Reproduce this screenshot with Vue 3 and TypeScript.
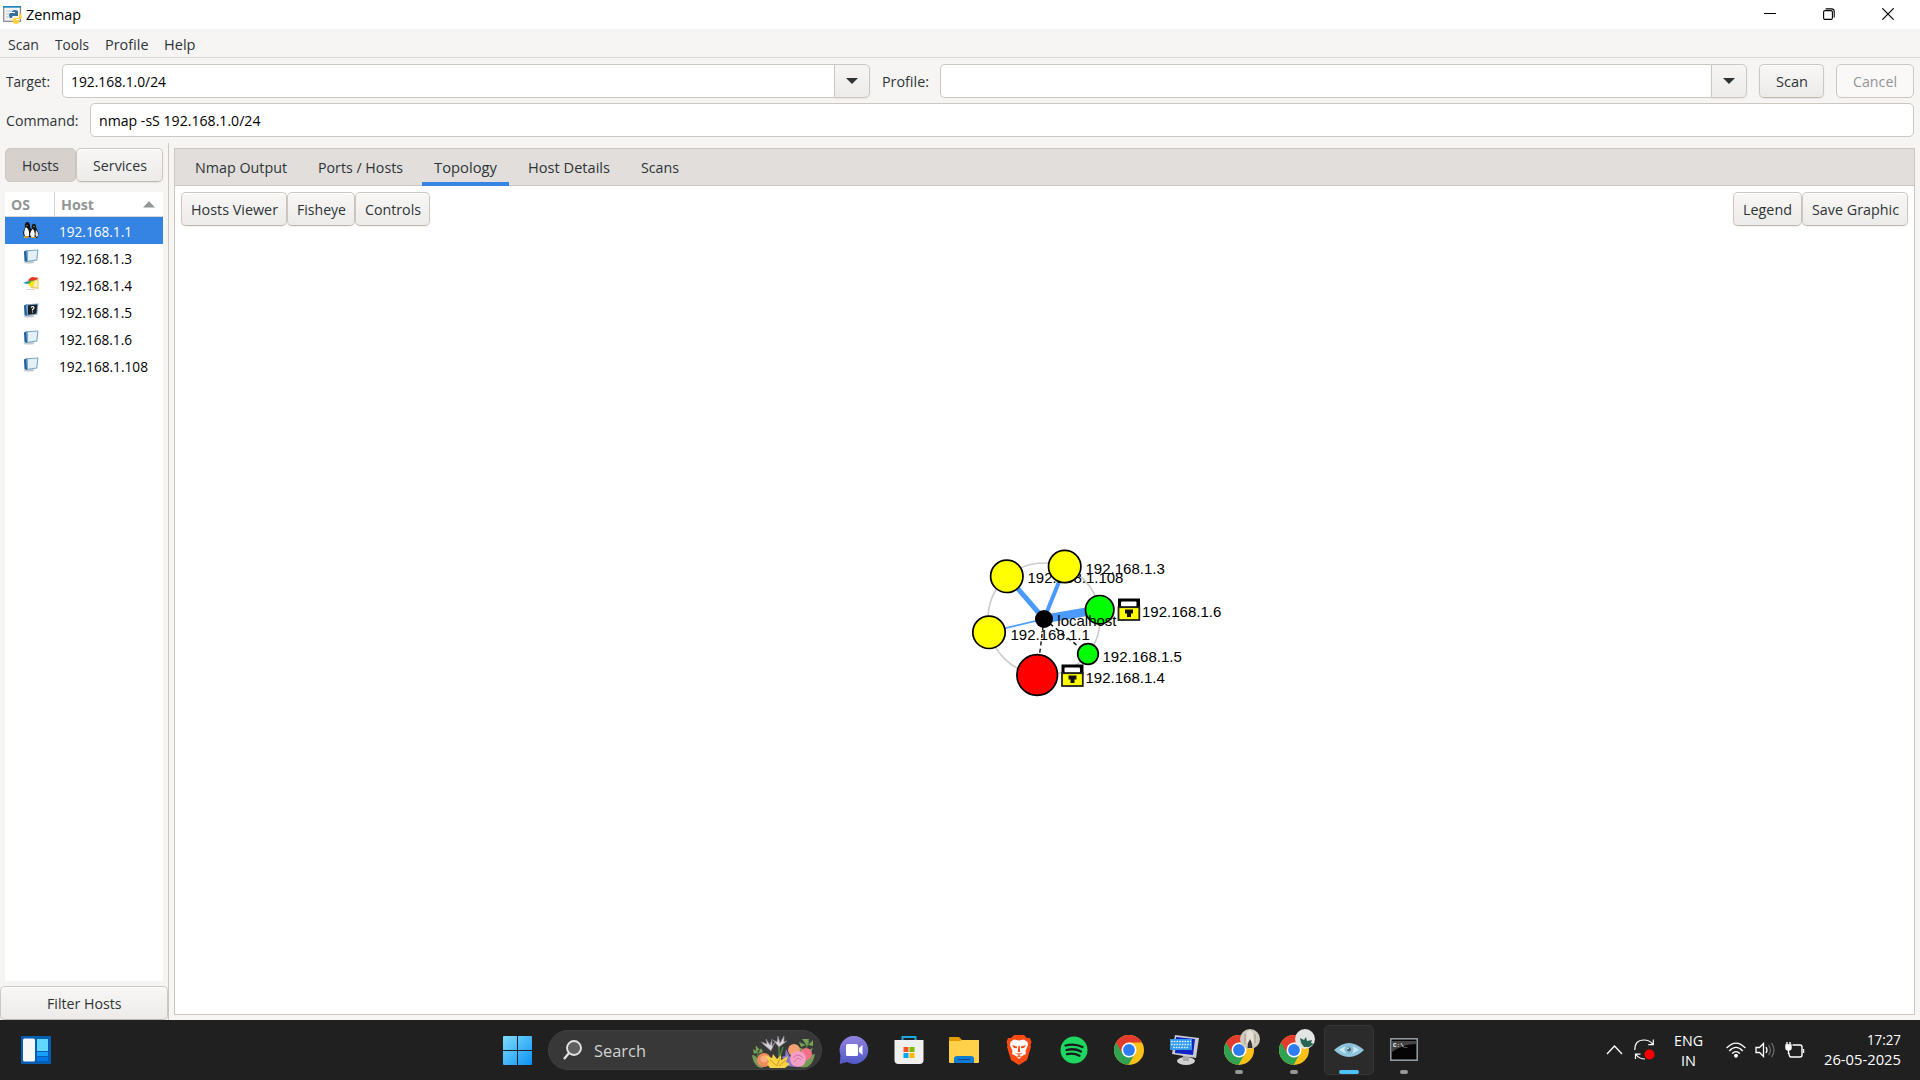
<script setup lang="ts">
import { ref } from 'vue'

// Squeezes or stretches a label horizontally to a given advance width.
const vFit = {
  mounted(el: HTMLElement, binding: { value: number }) {
    const natural = el.offsetWidth
    if (!natural) return
    const exact = el.getBoundingClientRect().width
    el.style.transform = `scaleX(${binding.value / exact})`
    el.style.marginRight = `${binding.value - exact}px`
  },
}

const target = ref('192.168.1.0/24')
const command = ref('nmap -sS 192.168.1.0/24')
const activeTab = ref('Topology')
const selected = ref('192.168.1.1')

const menus = [
  { label: 'Scan', w: 31 },
  { label: 'Tools', w: 34 },
  { label: 'Profile', w: 43.5 },
  { label: 'Help', w: 31.5 },
]
const hosts = [
  { ip: '192.168.1.1', os: 'linux', w: 73 },
  { ip: '192.168.1.3', os: 'default', w: 73 },
  { ip: '192.168.1.4', os: 'windows', w: 73 },
  { ip: '192.168.1.5', os: 'unknown', w: 73 },
  { ip: '192.168.1.6', os: 'default', w: 73 },
  { ip: '192.168.1.108', os: 'default', w: 89 },
]
const tabs = [
  { label: 'Nmap Output', w: 92 },
  { label: 'Ports / Hosts', w: 85 },
  { label: 'Topology', w: 63 },
  { label: 'Host Details', w: 82 },
  { label: 'Scans', w: 38 },
]
const nodes = [
  { label: '192.168.1.108', x: 1006.8, y: 576.3, r: 16.2, fill: '#ffff00', tx: 1027.5, ty: 583 },
  { label: '192.168.1.3', x: 1064.7, y: 566.5, r: 16.2, fill: '#ffff00', tx: 1085.5, ty: 574 },
  { label: '192.168.1.1', x: 989, y: 632.3, r: 16.2, fill: '#ffff00', tx: 1010.5, ty: 640 },
  { label: '192.168.1.6', x: 1099.7, y: 609.7, r: 14.2, fill: '#00ff00', tx: 1142, ty: 617 },
  { label: '192.168.1.5', x: 1088, y: 654, r: 10.3, fill: '#00ff00', tx: 1102.5, ty: 662 },
  { label: '192.168.1.4', x: 1037.2, y: 675, r: 20.3, fill: '#ff0000', tx: 1085.5, ty: 683 },
]
const locks = [
  { x: 1117, y: 598 },
  { x: 1060.5, y: 664 },
]
const apps = ['chat', 'store', 'folder', 'brave', 'spotify', 'chrome', 'putty', 'chrome1', 'chrome2', 'zenmap', 'cmd']
</script>

<template>
  <div class="screen">
    <header class="titlebar">
      <svg class="appicon" width="19" height="18" viewBox="0 0 19 18">
        <rect x=".7" y=".7" width="16.8" height="14.6" fill="#f4f4f4" stroke="#858585" stroke-width="1.2" />
        <rect x="0" y="0" width="18" height="1.6" fill="#1a86c8" />
        <path d="M3 5h6M3 8h3M3 11h3" stroke="#c4c4c4" />
        <path d="M9 5q3-2 6 0v5h-5q-1 0-1 2H7q-2-3 0-5h5V6H9z" fill="#36709f" />
        <path d="M16 7h1q3 3 1 6h-5v1h3v3q-3 2-6 0v-5h5q1 0 1-2z" fill="#ffd43b" />
      </svg>
      <span v-fit="55" class="t title">Zenmap</span>
      <div class="winbtns">
        <svg width="12" height="12" viewBox="0 0 12 12"><path d="M0 5.5h12" stroke="#000" /></svg>
        <svg width="12" height="12" viewBox="0 0 12 12" fill="none" stroke="#000" stroke-width="1.1">
          <rect x=".6" y="2.6" width="8.8" height="8.8" rx="1.4" />
          <path d="M2.6 .9h6q2.6 0 2.6 2.6v6" />
        </svg>
        <svg width="12" height="12" viewBox="0 0 12 12"><path d="M.3.3l11.4 11.4M11.7.3L.3 11.7" stroke="#000" stroke-width="1.2" /></svg>
      </div>
    </header>

    <nav class="menubar">
      <span v-for="m in menus" :key="m.label" class="menu"><span v-fit="m.w" class="t">{{ m.label }}</span></span>
    </nav>

    <div class="row target-row">
      <span class="lbl l1"><span v-fit="44" class="t">Target:</span></span>
      <div class="combo c1">
        <div class="entry"><span v-fit="95" class="t dark">{{ target }}</span></div>
        <div class="drop"><svg width="12" height="6" viewBox="0 0 12 6"><path d="M0 0h12L6 6z" fill="#2e3436" /></svg></div>
      </div>
      <span class="lbl l2"><span v-fit="47" class="t">Profile:</span></span>
      <div class="combo c2">
        <div class="entry"></div>
        <div class="drop"><svg width="12" height="6" viewBox="0 0 12 6"><path d="M0 0h12L6 6z" fill="#2e3436" /></svg></div>
      </div>
      <button class="btn scan"><span v-fit="32" class="t">Scan</span></button>
      <button class="btn cancel"><span v-fit="44" class="t">Cancel</span></button>
    </div>

    <div class="row command-row">
      <span class="lbl l3"><span v-fit="72.5" class="t">Command:</span></span>
      <div class="entry full"><span v-fit="161.5" class="t dark">{{ command }}</span></div>
    </div>

    <main class="body">
      <aside class="side">
        <div class="toggle">
          <button class="btn on"><span v-fit="37" class="t">Hosts</span></button>
          <button class="btn services"><span v-fit="54" class="t">Services</span></button>
        </div>
        <div class="tree">
          <div class="thead">
            <span class="th os"><span v-fit="19" class="t">OS</span></span>
            <span class="th host">
              <span v-fit="33" class="t">Host</span>
              <svg width="12" height="7" viewBox="0 0 12 7"><path d="M0 6.5h12L6 .2z" fill="#929595" /></svg>
            </span>
          </div>
          <div v-for="h in hosts" :key="h.ip" class="tr" :class="{ sel: h.ip === selected }" @click="selected = h.ip">
            <svg v-if="h.os === 'linux'" class="osicon tux" width="16" height="16" viewBox="0 0 16 16">
              <path d="M4 0q3 0 3 4l2 7-1 4H1L0 10l2-4q-1-5 2-6z" fill="#101010" />
              <path d="M3 5q-3 5-1 9h4q1-6-3-9z" fill="#fff" />
              <path d="M10 2q3-1 3 3l3 7-2 4H8L6 11l3-5q-1-3 1-4z" fill="#181818" />
              <path d="M9.500 7q-4 5-1 8h3q1-6-2-8z" fill="#fff" /><path d="M13 8q-1 4 0 7l2-1q1-3-2-6z" fill="#ddd" />
              <path d="M1 14h5l-1 2H1zM8 15h5v1H8z" fill="#cf9d2c" /><path d="M3 3h2l-1 1zM10 4h2l-1 1z" fill="#e8b030" />
            </svg>
            <svg v-else-if="h.os === 'windows'" class="osicon up" width="16" height="14" viewBox="0 0 16 14">
              <path d="M7 2l8.500-1v11l-8-1z" fill="#eccb62" /><path d="M10 4l4.500-.5v7l-4-.8z" fill="#fbf0b8" />
              <path d="M6 2q3-3 6-1.500L15 .5l-1 2-3 1-6 1z" fill="#e93325" /><path d="M0 6l5-2 2 1-3 2z" fill="#168ed2" />
              <path d="M4 5.500l5-2.500 2 1-3 5z" fill="#48ae3b" /><path d="M5 8l4-4 3 1-3 5z" fill="#ffe414" /><path d="M3 12.500h9" stroke="#d8d8d8" />
            </svg>
            <svg v-else class="osicon up" width="16" height="15" viewBox="0 0 16 15">
              <ellipse cx="6" cy="13.200" rx="5.500" ry="1.300" fill="#c5cbd0" />
              <path d="M1 2.500L4 1v12l-2.500-1z" fill="#1d5e9e" /><path d="M3 1.200L15.500.5l-1.200 11L4 13z" fill="#7ba6c4" />
              <path d="M5 2.200l9.300-.7-1 9-8.300 1.300z" :fill="h.os === 'unknown' ? '#1c2024' : '#e3f0f5'" />
              <path v-if="h.os === 'unknown'" d="M8 4.500q2-2 3 0 0 1-1.500 2v1M9.500 8.500v1" stroke="#fff" fill="none" stroke-width="1.200" />
            </svg>
            <span v-fit="h.w" class="t">{{ h.ip }}</span>
          </div>
        </div>
        <button class="btn filter"><span v-fit="74.5" class="t">Filter Hosts</span></button>
      </aside>

      <section class="notebook">
        <div class="tabs">
          <span v-for="t in tabs" :key="t.label" class="tab" :class="{ active: t.label === activeTab }" @click="activeTab = t.label">
            <span v-fit="t.w" class="t">{{ t.label }}</span>
          </span>
        </div>
        <div class="tools">
          <button class="btn b1"><span v-fit="87" class="t">Hosts Viewer</span></button>
          <button class="btn b2"><span v-fit="49" class="t">Fisheye</span></button>
          <button class="btn b3"><span v-fit="56" class="t">Controls</span></button>
          <span class="grow"></span>
          <button class="btn b4"><span v-fit="49" class="t">Legend</span></button>
          <button class="btn b5"><span v-fit="87" class="t">Save Graphic</span></button>
        </div>
        <svg class="graph" width="280" height="180" viewBox="960 530 280 180">
          <circle cx="1044" cy="619" r="56" fill="none" stroke="#cccccc" stroke-width="1.600" />
          <g stroke="#4a9aff">
            <path d="M1044 619L1007 576" stroke-width="5" /><path d="M1044 619L1065 567" stroke-width="4" />
            <path d="M1044 619L1100 609.500" stroke-width="8.500" /><path d="M1044 619L989 632" stroke-width="1.700" />
          </g>
          <path d="M1044 619L1037 675M1044 619L1088 654" stroke="#111" stroke-width="1.400" stroke-dasharray="4 3.500" />
          <g v-for="n in nodes" :key="n.label">
            <circle :cx="n.x" :cy="n.y" :r="n.r" :fill="n.fill" stroke="#000" stroke-width="1.700" />
            <text :x="n.tx" :y="n.ty">{{ n.label }}</text>
          </g>
          <circle cx="1044" cy="619" r="9" fill="#000" />
          <text x="1057.300" y="626.300">localhost</text>
          <g v-for="l in locks" :key="l.x" :transform="`translate(${l.x} ${l.y})`">
            <path d="M1 .500h22v10H1z" fill="#000" /><rect x="4" y="3.500" width="15.500" height="5" rx="1" fill="#fff" />
            <rect x="1.500" y="9.200" width="20.800" height="12.800" fill="#ffff00" stroke="#222" stroke-width="1.800" />
            <path d="M8 11.500h8v4h-2v3.500h-4v-3.500H8z" fill="#111" />
          </g>
        </svg>
      </section>
    </main>

    <footer class="taskbar">
      <svg class="widgets" width="30" height="28" viewBox="0 0 30 28">
        <rect width="30" height="28" rx="1" fill="#075db2" /><rect x="2" y="2.500" width="12" height="23" rx="1.500" fill="#f7f7f7" />
        <path d="M16 3h11v12H16z" fill="#62d8ff" /><path d="M16 16h11v4H16z" fill="#16a1fb" /><path d="M16 21h11v4H16z" fill="#0078e5" />
      </svg>
      <svg class="start" width="29" height="29" viewBox="0 0 29 29">
        <defs><linearGradient id="win" x2="1" y2="1"><stop stop-color="#80dcff" /><stop offset="1" stop-color="#0a91f3" /></linearGradient></defs>
        <path d="M1 0h13v14H0V1q0-1 1-1zM15 0h13q1 0 1 1v13H15zM0 15h14v14H1q-1 0-1-1zM15 15h14v13q0 1-1 1H15z" fill="url(#win)" />
      </svg>
      <div class="search">
        <svg width="19" height="20" viewBox="0 0 19 20" fill="#606060" stroke="#e3e3e3" stroke-width="1.900"><circle cx="11" cy="8" r="7" /><path d="M6 13L1 19" stroke-width="2.200" /></svg>
        <span v-fit="52" class="t stext">Search</span>
        <svg class="flowers" width="65" height="33" viewBox="0 0 65 33">
          <path d="M1 19q5-1 11 13Q3 32 1 19zM64 18q-7 0-15 13 12 3 15-13z" fill="#759b55" />
          <path d="M8 25L5 10M28 30V10M29 20l3-9M50 25l8-20" stroke="#4f8142" stroke-width="1.500" />
          <path d="M5 10l4 4-4 1zM2 13l5 3-4 2zM10 12l-3 6 5-2zM48 6l7 3-5 2zM51 3l5 7 2-7zM62 4l-5 5 5 1zM47 11l8 3-6 1zM62 12l-7 3 5 1z" fill="#77a354" />
          <path d="M20 15L10 6l6 2-1-5 4 6 2-6v7l3-4zM28 11L22 4l4 2 1-6 2 7 4-7v6l3-1z" fill="#d7d3d7" stroke="#85808b" stroke-width=".7" />
          <circle cx="13" cy="24" r="7" fill="#ef8a5f" /><circle cx="13" cy="23" r="3.500" fill="#f8ae82" />
          <circle cx="43" cy="14" r="6" fill="#f5a070" /><circle cx="55" cy="18" r="6" fill="#f27186" />
          <path d="M35 13l6 12 3 6-7-1-3-6-4-3 4-1z" fill="#8a7ace" />
          <circle cx="47" cy="23" r="8" fill="#f3a0c6" /><path d="M42 22q5-6 10 0M43 26q4-6 7-2" fill="none" stroke="#d96da3" />
          <path d="M14 19l7 3 1-4 4 5 4-4v5l7-4-2 6 4 2-5 4H19l-3-4 2-2z" fill="#f5d345" /><path d="M19 24l7 6 3-8M28 30l7-6" stroke="#d69b21" fill="none" />
        </svg>
      </div>
      <div v-for="a in apps" :key="a" class="app" :class="{ current: a === 'zenmap' }">
        <svg v-if="a === 'chat'" width="30" height="30" viewBox="0 0 30 30">
          <defs><linearGradient id="ch" x2="0" y2="1"><stop stop-color="#8f83dc" /><stop offset="1" stop-color="#5158c8" /></linearGradient></defs>
          <path d="M15 1a14 14 0 1 1-7 26L.8 29l.7-9A14 14 0 0 1 15 1z" fill="url(#ch)" />
          <rect x="7" y="9" width="12" height="12" rx="1.500" fill="#fff" /><path d="M20 13l3.500-3v10L20 17z" fill="#fff" />
        </svg>
        <svg v-else-if="a === 'store'" width="30" height="30" viewBox="0 0 30 30">
          <path d="M8.500 7V2h13v5" fill="none" stroke="#1da8df" stroke-width="2" /><path d="M.5 5h29v20q0 4-4 4h-21q-4 0-4-4z" fill="#f0f0f0" />
          <path d="M9.500 12h5v5h-5z" fill="#f25022" /><path d="M15.500 12h5v5h-5z" fill="#7fba00" /><path d="M9.500 18h5v5h-5z" fill="#00a4ef" /><path d="M15.500 18h5v5h-5z" fill="#ffb900" />
        </svg>
        <svg v-else-if="a === 'folder'" width="30" height="30" viewBox="0 0 30 30">
          <path d="M0 3q0-1 1-1h9l3 3v5H0z" fill="#df9d06" /><path d="M0 6h11l2-1h17v22q0 1-1 1H1q-1 0-1-1z" fill="#ffd04a" />
          <path d="M5 28v-4q0-3 3-3h14q3 0 3 3v4z" fill="#0e7bd0" /><path d="M9 24.500h12" stroke="#064d91" />
        </svg>
        <svg v-else-if="a === 'brave'" width="26" height="30" viewBox="0 0 26 30">
          <path d="M8 0h10l3 3 3 0 1.500 4-1 3 .5 2-4 13-8 5-8-5L1 12l.5-2-1-3L2 3l3 0z" fill="#fb4a12" />
          <path d="M8 4.500l5 1 5-1 3.500 2.500.5 3-2.500 6 .5 3-4 2-3 3-3-3-4-2 .500-3L4 10l.5-3z" fill="#fff" />
          <path d="M6 10l5 1.500v1.800L8 13zM20 10l-5 1.500v1.800l3-.3zM12.300 11h1.400l.5 6h-2.400zM9 18l4 2 4-2-4 .500zM10.500 21.500l2.500-1.500 2.500 1.500-2.500.500z" fill="#fb4a12" />
        </svg>
        <svg v-else-if="a === 'spotify'" width="28" height="28" viewBox="0 0 28 28">
          <circle cx="14" cy="14" r="13.500" fill="#1ed760" /><path d="M5.500 9.500q9-2.500 17 1.500M6.500 14q8-2 14.500 1.500M7 18.200q7-1.500 12.500 1.500" fill="none" stroke="#1b1b1b" stroke-width="2.300" stroke-linecap="round" />
        </svg>
        <svg v-else-if="a.startsWith('chrome')" class="chrome" width="40" height="40" viewBox="-5 -5 40 40">
          <circle cx="15" cy="15" r="15" fill="#fbc116" />
          <path d="M15 15L2 7.500A15 15 0 0 0 14.500 30L21 18.500z" fill="#30a352" /><path d="M2 7.500A15 15 0 0 1 28 7.500H15L8.500 18.700z" fill="#e33b2e" />
          <circle cx="15" cy="15" r="7.500" fill="#fff" /><circle cx="15" cy="15" r="5.900" fill="#2d7df0" />
          <g v-if="a === 'chrome1'"><circle cx="26" cy="4" r="10" fill="#cfc9be" /><path d="M23-3q3-4 6 1l1 10h-8z" fill="#e7e0d4" /><path d="M26 4l1.500 3 1 6-5 0 .5-5z" fill="#383634" /><path d="M21-1v10M31-1v9" stroke="#9d968a" /></g>
          <g v-if="a === 'chrome2'"><circle cx="26" cy="4" r="10" fill="#e3e5e5" /><path d="M21 3l4 2 2-3 1 4 5-1-1 3 3 1-5 3-5 0-3-4z" fill="#276753" /></g>
        </svg>
        <svg v-else-if="a === 'putty'" width="30" height="30" viewBox="0 0 30 30">
          <ellipse cx="17" cy="26" rx="9" ry="4" fill="#d2d2d2" /><path d="M14 19h6v7h-6z" fill="#a8a8a8" />
          <path d="M6 0l24 3-3 20L3 19z" fill="#c9ccd1" /><path d="M7 2l19 2-2 16-18-2z" fill="#1322c2" />
          <path d="M1 4h22v11H1z" fill="#2f97ed" /><path d="M2 6.500h20M2 9.500h20M4 12.500h16" stroke="#d8efff" stroke-width="1.600" stroke-dasharray="1.700 1" />
        </svg>
        <svg v-else-if="a === 'zenmap'" width="30" height="16" viewBox="0 0 30 16">
          <path d="M0 8Q8 1 15 1t15 7q-7 7-15 7T0 8z" fill="#8fc6de" /><path d="M5 8q10-8 20 0Q15 15 5 8z" fill="#c9e8f2" />
          <circle cx="15" cy="7.500" r="4.500" fill="#8dbccf" /><circle cx="15" cy="7.500" r="2" fill="#3b667d" /><circle cx="14" cy="6.500" r=".8" fill="#fff" />
        </svg>
        <svg v-else width="28" height="24" viewBox="0 0 28 24">
          <rect x=".8" y=".8" width="26.400" height="21.400" fill="#050505" stroke="#98a0aa" stroke-width="1.500" /><path d="M2 3h24v3Q13 6 2 14z" fill="#444" />
          <text x="3" y="9" font-family="Liberation Mono" font-size="6" font-weight="bold" fill="#fff">C:\_</text>
        </svg>
        <i v-if="['chrome1', 'chrome2', 'zenmap', 'cmd'].includes(a)" class="mark"></i>
      </div>
      <div class="tray">
        <svg class="chev" width="17" height="10" viewBox="0 0 17 10"><path d="M1 9l7.500-8L16 9" fill="none" stroke="#fff" stroke-width="1.300" /></svg>
        <svg class="sync" width="22" height="22" viewBox="0 0 22 22">
          <path d="M.8 11Q.8 1 10 1q6 0 9 4.500M19.300.5v5.200h-5M1.500 20v-4.800h5M2 15.500q3 4.500 9 4.500" fill="none" stroke="#fff" stroke-width="1.200" /><circle cx="15.500" cy="15.500" r="5" fill="#f00" />
        </svg>
        <div class="lang"><span v-fit="29" class="t">ENG</span><span v-fit="15" class="t">IN</span></div>
        <svg class="wifi" width="20" height="16" viewBox="0 0 20 16" fill="none" stroke="#fff" stroke-width="1.400"><path d="M.6 6q9.400-9.800 18.800 0M3.300 8.900q6.700-7 13.400 0M6.100 11.600q3.900-4 7.800 0" /><circle cx="10" cy="13.700" r="1.300" fill="#fff" /></svg>
        <svg class="vol" width="21" height="16" viewBox="0 0 21 16" fill="none" stroke="#fff" stroke-width="1.300"><path d="M1 5.500h3.500L8.500 1.500v13l-4-4H1z" /><path d="M11 5q2 3 0 6" /><path d="M13.500 3q4 5 0 10M16.500 1q5 7 0 14" stroke="#666" /></svg>
        <svg class="bat" width="20" height="17" viewBox="0 0 20 17" fill="none" stroke="#fff" stroke-width="1.400"><path d="M7.500 3H15q2 0 2 2v8q0 2-2 2H6q-2 0-2-4" /><path d="M1 3h5v3q0 2-2.500 2T1 6zM18.500 7v4" fill="#fff" /><path d="M2 0v3M5 0v3M3.500 7v5" /></svg>
        <div class="clock"><span v-fit="34" class="t">17:27</span><span v-fit="77" class="t">26-05-2025</span></div>
      </div>
    </footer>
  </div>
</template>

<style>
html, body { margin: 0; overflow: hidden; }
</style>

<style scoped>
* { box-sizing: border-box; }
.screen { width: 1920px; height: 1080px; background: #f6f5f4; color: #2e3436; font: 15px/20px "Open Sans", "Noto Sans", sans-serif; display: flex; flex-direction: column; }
.t { display: inline-block; white-space: pre; transform-origin: 0 50%; flex: none; }
.dark { color: #000; }
svg { display: block; flex: none; }
.titlebar { height: 29px; background: #fff; color: #000; display: flex; align-items: center; padding-left: 3px; }
.appicon { margin: 0 4px 0 0; }
.title { margin-top: -2px; }
.winbtns { margin-left: auto; display: flex; gap: 47px; padding-right: 26px; margin-top: -1px; }
.menubar { height: 29px; border-bottom: 1px solid #d9d7d4; display: flex; gap: 16px; padding: 5px 0 0 7.5px; }
.menu { display: block; }
.row { display: flex; align-items: center; height: 34px; flex: none; padding-right: 6px; }
.target-row { margin-top: 6px; }
.command-row { margin-top: 5px; }
.lbl { display: flex; padding-left: 6px; }
.l1 { width: 62px; }
.l2 { width: 70px; padding-left: 12px; }
.l3 { width: 90px; }
.combo { display: flex; height: 34px; }
.c1 { width: 808px; }
.c2 { width: 807px; }
.entry { flex: 1; height: 34px; background: #fff; border: 1px solid #cdc7c2; border-radius: 5px 0 0 5px; border-right: 0; padding: 0 8px; display: flex; align-items: center; }
.full { border-right: 1px solid #cdc7c2; border-radius: 5px; padding: 0 8px; }
.drop { width: 36px; border: 1px solid #cdc7c2; border-radius: 0 5px 5px 0; background: linear-gradient(#f6f5f4, #edebe9); display: flex; align-items: center; justify-content: center; box-shadow: 0 1px 2px #0001; }
.btn { height: 34px; border: 1px solid #cdc7c2; border-bottom-color: #bfb8b1; border-radius: 5px; background: linear-gradient(#f8f7f6, #edebe9); font: inherit; color: inherit; padding: 0; display: flex; align-items: center; justify-content: center; flex: none; box-shadow: inset 0 1px #fff, 0 1px 2px #00000012; }
.scan { width: 65px; margin-left: 12px; }
.cancel { width: 78px; margin-left: 12px; background: #faf9f8; color: #929595; border-color: #cdc7c2; box-shadow: none; }
.body { display: flex; height: 883px; flex: none; }
.side { width: 169px; margin-top: 6px; height: 877px; border-right: 1px solid #cdc7c2; display: flex; flex-direction: column; }
.toggle { display: flex; padding: 5px 0 0 5px; }
.on { width: 71px; background: #d6d1cd; box-shadow: none; border-color: #cdc7c2; }
.services { width: 87px; }
.tree { width: 158px; height: 789px; margin: 10px 0 5px 5px; background: #fff; flex: none; }
.thead { display: flex; height: 25px; border-bottom: 1px solid #d8d4d0; font-weight: 700; font-size: 14.500px; color: #929595; }
.th { display: flex; align-items: center; padding-left: 6px; padding-top: 1px; }
.os { width: 50px; border-right: 1px solid #d5d0cc; }
.host { flex: 1; justify-content: space-between; padding-right: 8px; }
.tr { height: 27px; display: flex; align-items: center; padding-left: 17.500px; color: #000; }
.osicon { margin-right: 20.500px; }
.up { margin-top: -2px; }
.tux { margin-top: -1px; }
.sel { background: #3584e4; color: #fff; }
.filter { width: 168px; }
.notebook { position: relative; width: 1741px; height: 867px; margin: 11px 0 0 5px; border: 1px solid #cdc7c2; background: #fff; }
.tabs { height: 37px; background: #e1dedb; border-bottom: 1px solid #cdc7c2; display: flex; padding-left: 8px; }
.tab { padding: 8px 12px 0; height: 37px; margin-right: 7px; }
.active { border-bottom: 4px solid #3584e4; }
.tools { display: flex; padding: 6px 6px 0; }
.grow { flex: 1; }
.b1 { width: 106px; } .b2 { width: 68px; } .b3 { width: 75px; } .b4 { width: 69px; } .b5 { width: 106px; }
.graph { position: absolute; left: 785px; top: 381px; font: 15px "Liberation Sans", Arial, sans-serif; }
.taskbar { height: 60px; flex: none; background: #202020; display: flex; align-items: center; color: #fff; }
.widgets { margin-left: 21px; }
.start { margin: 1px 16px 0 452px; }
.search { width: 274px; height: 40px; margin-right: 4px; border-radius: 20px; background: #383838; border: 1px solid #414141; display: flex; align-items: center; padding-left: 14px; }
.stext { margin-left: 12px; font-size: 17px; color: #d2d2d2; margin-top: 1px; }
.flowers { margin-left: auto; margin-right: 5px; margin-top: 4px; }
.app { width: 55px; height: 50px; display: flex; align-items: center; justify-content: center; position: relative; }
.current { width: 50px; margin: 0 2.500px; background: #2b2b2b; border: 1px solid #363636; border-radius: 5px; }
.chrome { overflow: visible; }
.mark { position: absolute; bottom: 1px; width: 8px; height: 4px; border-radius: 2px; background: #979797; }
.current .mark { width: 20px; bottom: 0; background: #4cc2ff; }
.tray { margin-left: auto; display: flex; align-items: center; padding-right: 19px; }
.sync { margin-left: 11px; }
.lang { margin: -1px 0 0 18px; display: flex; flex-direction: column; align-items: flex-start; font-size: 15px; }
.lang .t:last-child { margin-left: 7px; }
.wifi { margin-left: 23px; }
.vol { margin-left: 9px; }
.bat { margin-left: 9px; }
.clock { margin: -2px 0 0 19px; width: 77px; display: flex; flex-direction: column; align-items: flex-start; font-size: 15px; }
.clock .t:first-child { margin-left: 43px; }
</style>
